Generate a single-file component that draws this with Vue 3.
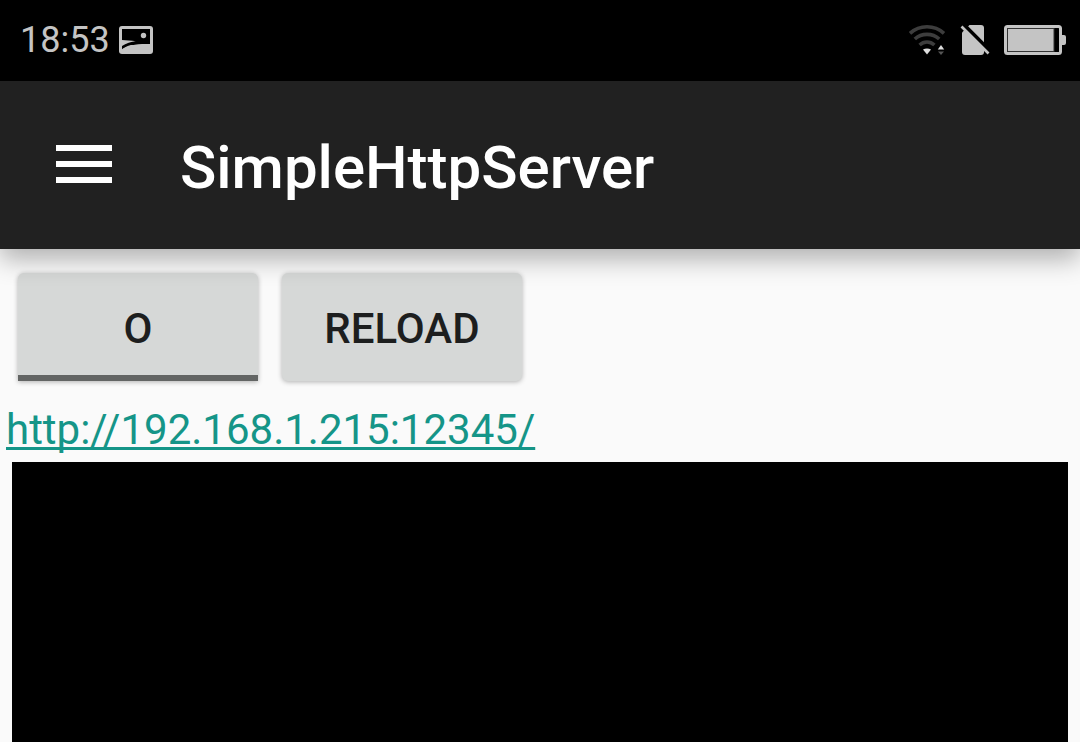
<script setup>
import { ref } from 'vue'

const title = 'SimpleHttpServer'
const address = 'http://192.168.1.215:12345/'
const running = ref(false)
const log = ref('')

function toggle() {
  running.value = !running.value
}

function reload() {
  log.value = ''
}
</script>

<template>
  <div class="screen">
    <header class="status">
      <div class="status-group">
        <time class="clock">18:53</time>
        <svg class="picture" width="34" height="28" viewBox="0 0 34 28" aria-hidden="true">
          <rect width="34" height="28" rx="3" fill="#c4c4c4" />
          <rect x="3" y="3" width="28" height="16" fill="#000" />
          <circle cx="24.500" cy="9.500" r="2.700" fill="#c4c4c4" />
          <path d="M3 14C7 14.500 12 14.600 17 15.200C11 16.800 6 18.500 3 21Z" fill="#c4c4c4" />
          <path d="M3 20C7 17.200 12 15.600 17.500 15.200L24 17C15 17.500 8 19.500 3 23.500Z" fill="#000" />
          <path d="M3 23.500C8 19.500 18 17.500 31 18V25H3Z" fill="#c4c4c4" />
        </svg>
      </div>
      <div class="status-group status-icons">
        <svg class="wifi" width="37" height="32" viewBox="0 0 37 32" aria-hidden="true">
          <g fill="none" stroke="#3d3d3d" stroke-width="3.600">
            <path d="M1 9.300C10.500 0.600 25.500 0.600 35 9.300" />
            <path d="M5.800 15C12.500 8.800 23.500 8.800 30.200 15" />
            <path d="M10.600 21C15 17 21 17 25.400 21" />
          </g>
          <path d="M14 25.500C16.500 24.200 19.500 24.200 22 25.500L18 30.500Z" fill="#dedede" />
          <path d="M32 21L35.200 25.500H28.800Z" fill="#dedede" />
          <path d="M29 27.500H35L32 31Z" fill="#555" />
        </svg>
        <svg class="sim" width="30" height="32" viewBox="0 0 30 32" aria-hidden="true">
          <path d="M9.500 1H21Q24 1 24 4V28Q24 31 21 31H5Q2 31 2 28V8.500Z" fill="#c4c4c4" />
          <path d="M3 0L29 26" stroke="#000" stroke-width="4" />
          <path d="M1.500 2.500L28.500 29.500" stroke="#c4c4c4" stroke-width="2.600" />
        </svg>
        <svg class="battery" width="62" height="30" viewBox="0 0 62 30" aria-hidden="true">
          <rect x="1.500" y="1.500" width="55" height="27" rx="2" fill="none" stroke="#c4c4c4" stroke-width="3" />
          <rect x="4" y="4" width="46" height="22" fill="#c4c4c4" />
          <rect x="3.500" y="3.500" width="46.500" height="23" fill="none" stroke="#333" stroke-width="1" />
          <path d="M58 10H60Q62 10 62 12V18Q62 20 60 20H58Z" fill="#c4c4c4" />
        </svg>
      </div>
    </header>

    <div class="toolbar">
      <button class="menu" type="button" aria-label="Open menu">
        <span class="bar"></span>
        <span class="bar"></span>
        <span class="bar"></span>
      </button>
      <h1 class="title">{{ title }}</h1>
    </div>

    <main class="content">
      <div class="actions">
        <button class="action toggle" type="button" :aria-pressed="running" @click="toggle">O</button>
        <button class="action" type="button" @click="reload">RELOAD</button>
      </div>
      <a class="address" :href="address">{{ address }}</a>
      <pre class="console">{{ log }}</pre>
    </main>
  </div>
</template>

<style>
body {
  margin: 0;
  background: #fafafa;
}
</style>

<style scoped>
.screen {
  display: flex;
  flex-direction: column;
  min-height: 100vh;
  overflow: hidden;
  font-family: Roboto, "Liberation Sans", sans-serif;
  background: #fafafa;
}

.status {
  display: flex;
  align-items: center;
  justify-content: space-between;
  box-sizing: border-box;
  min-height: 81px;
  padding: 0 14px 2px 20px;
  background: #000;
}

.status-group {
  display: flex;
  align-items: center;
  gap: 9px;
}

.status-icons {
  gap: 14px;
}

.clock {
  font-size: 36px;
  line-height: 42px;
  color: #c4c4c4;
}

svg {
  display: block;
}

.toolbar {
  position: relative;
  z-index: 1;
  display: flex;
  align-items: center;
  box-sizing: border-box;
  min-height: 168px;
  padding: 0 48px 2px;
  background: #212121;
  box-shadow: 0 10px 24px rgba(0, 0, 0, 0.3);
}

.menu {
  display: flex;
  flex-direction: column;
  gap: 10px;
  padding: 8px;
  border: 0;
  background: none;
}

.bar {
  width: 56px;
  height: 6px;
  background: #fff;
}

.title {
  margin: 8px 0 0 60px;
  font-size: 60px;
  font-weight: 500;
  line-height: 70px;
  color: #fff;
}

.content {
  display: flex;
  flex: 1;
  flex-direction: column;
  align-items: flex-start;
}

.actions {
  display: flex;
  gap: 24px;
  padding: 24px 18px;
}

.action {
  min-width: 240px;
  height: 108px;
  padding: 4px 24px 0;
  border: 0;
  border-radius: 6px;
  background: #d6d8d7;
  box-shadow: 0 1px 5px rgba(0, 0, 0, 0.3);
  font-family: inherit;
  font-size: 42px;
  font-weight: 500;
  line-height: 50px;
  color: #1d1e1e;
}

.toggle {
  border-radius: 6px 6px 0 0;
  background: linear-gradient(#636564, #636564) bottom / 100% 6px no-repeat #d6d8d7;
}

.address {
  margin-left: 6px;
  font-size: 42px;
  line-height: 50px;
  color: #159588;
  text-decoration-thickness: 3px;
  text-underline-offset: 3px;
  text-decoration-skip-ink: none;
}

.console {
  flex: 1;
  align-self: stretch;
  margin: 7px 12px 0;
  background: #000;
  color: #fff;
}
</style>
